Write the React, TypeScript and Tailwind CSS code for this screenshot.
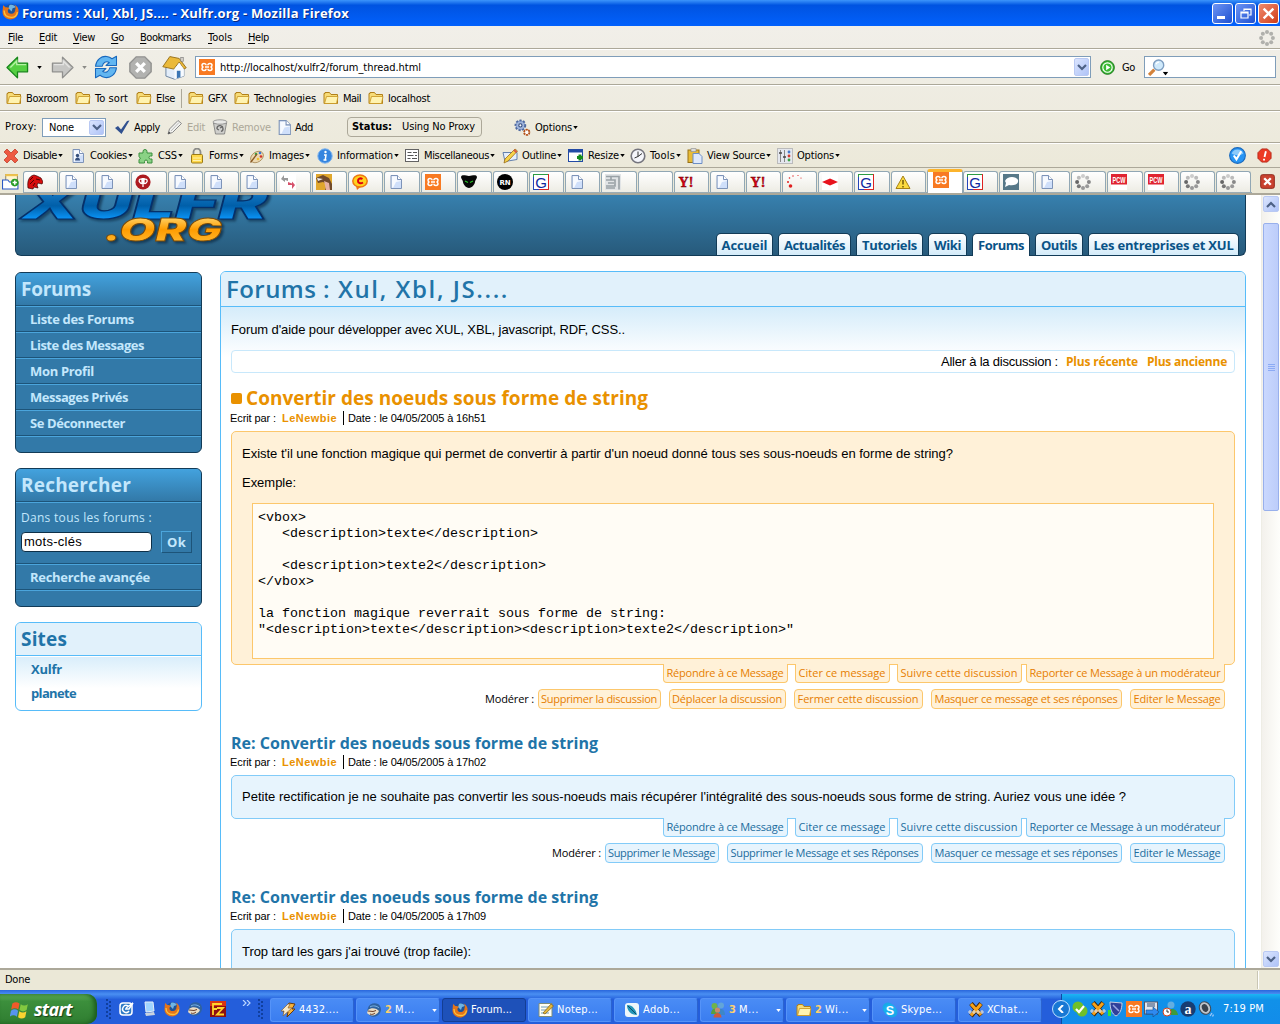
import { useLayoutEffect, useRef, useState, type ReactNode } from "react";

/* Text run set to a given width by spreading its letters. */
function Fit({ w, children, className = "" }: { w: number; children: ReactNode; className?: string }) {
  const ref = useRef<HTMLSpanElement>(null);
  const [gap, setGap] = useState<number | null>(null);
  useLayoutEffect(() => {
    const el = ref.current;
    if (!el || gap !== null) return;
    setGap((w - el.getBoundingClientRect().width) / (el.textContent || " ").length);
  }, [gap, w]);
  return (
    <span ref={ref} className={"inline-block shrink-0 whitespace-pre " + className} style={gap === null ? undefined : { letterSpacing: gap }}>
      {children}
    </span>
  );
}

const page = (
  <g>
    <path d="M3 1.500h6.500l4 4v9H3z" fill="#dfe9fb" stroke="#7d93b8" />
    <path d="M4 2.500h5v4h4v7H4z" fill="#f7faff" />
    <path d="M8 8l5-1v7H5z" fill="#cfdffa" />
    <path d="M9.500 1.500v4h4" fill="#fff" stroke="#7d93b8" />
  </g>
);
const throbber = (on: boolean) => (
  <g>
    {[0, 1, 2, 3, 4, 5, 6, 7].map((i) => {
      const a = (i * Math.PI) / 4;
      const c = on ? ["#888", "#999", "#999", "#777", "#666", "#bbb", "#ccc", "#bbb"][i] : "#b0b0ac";
      return <circle key={i} cx={8 + 5.9 * Math.cos(a)} cy={8 + 5.9 * Math.sin(a)} r="2" fill={c} />;
    })}
  </g>
);
const xul = (
  <g>
    <rect width="16" height="16" fill="#f87a22" />
    <path d="M7.200 6.300C7 3.800 3 4 3 6.200 3 7.200 3.800 8 4.600 8 3.800 8 3 8.800 3 9.800 3 12 7 12.200 7.200 9.700M8.800 6.300C9 3.800 13 4 13 6.200 13 7.200 12.200 8 11.400 8 12.200 8 13 8.800 13 9.800 13 12 9 12.200 8.800 9.700M6 8h4" fill="none" stroke="#fff" strokeWidth="1.500" />
  </g>
);
const firefox = (
  <g>
    <circle cx="8.500" cy="7.500" r="6.300" fill="#1f5396" />
    <path d="M7 2c2-1 5 0 6 2l-3 1-1 3-3-3z" fill="#6fb4e4" />
    <path d="M1 2c1 .5 1.500 1 2 2 1.500 0 3 0 4 1L5.500 6.500c-.5 3 2 4 4 3.500s3-2 3-4c1-2 0-3-1-4.500 3 1.500 4.500 4 4 7-.5 4-3.500 7-7.500 7S.5 12.500.5 8.500C.5 6 1 4 1 2z" fill="#e5741a" />
    <path d="M2 7c0 5 3.500 6.500 7 6.500 3 0 5-2 5.500-5" fill="none" stroke="#fbc23c" strokeWidth="1.300" />
  </g>
);
const bird = (
  <g>
    <path d="M2 6C3 2 8 0 12 2c3 2 4 6 2 9-2 4-8 5-11 2C1 11 1 8 2 6z" fill="#2f62a0" />
    <path d="M2 8c3-3 9-2 11 1-2 5-9 6-12 2z" fill="#eadcc4" />
    <path d="M2 9l5 .5 3-1M4 12c2 1 4 0 5-1" stroke="#6b3e28" fill="none" /><path d="M4 5c3-2 7-1 9 1" stroke="#7cb6ea" fill="none" />
  </g>
);
const folder = (
  <g>
    <path d="M1 3.500h1v-1h4.500l1.500 2h6.500v9H1z" fill="#f7dc78" stroke="#b1801a" />
    <path d="M3.500 6.500h11.500l-1.500 7H1.500z" fill="#fff3b0" stroke="#c6931f" strokeWidth=".8" />
  </g>
);
const arrowBig = (c1: string, c2: string) => (
  <path d="M.7 8L8 .8v4.200h7v6H8v4.200z" fill={c1} stroke={c2} strokeWidth=".9" strokeLinejoin="round" />
);

const icons: Record<string, ReactNode> = {
  page, xul, firefox, bird, folder,
  empty: null,
  load: throbber(true), idle: throbber(false),
  back: <g>{arrowBig("#55cf42", "#17851b")}<path d="M3 8l4.500-4.500V6H14" fill="none" stroke="#b5f2a4" /></g>,
  fwd: <g transform="matrix(-1 0 0 1 16 0)">{arrowBig("#c6c6c4", "#90908e")}<path d="M3 8l4.500-4.500V6H14" fill="none" stroke="#e4e4e2" /></g>,
  reload: (
    <g stroke="#1868bd" strokeWidth=".7" fill="#62b6f1" strokeLinejoin="round">
      <path d="M1 7.500C1.500 3 5 .5 8.500 1c1.500.2 2.500.7 3.500 1.500L15 .8V7H8l2.200-2C8 3.800 6 5 5.500 7.500z" />
      <path d="M15 8.500c-.5 4.500-4 7-7.500 6.500-1.500-.2-2.500-.7-3.500-1.500L1 15.200V9h7l-2.200 2c2.200 1.200 4.200 0 4.700-2.500z" />
    </g>
  ),
  stop: <g><path d="M5 .6h6L15.400 5v6L11 15.400H5L.6 11V5z" fill="#b2b2b0" stroke="#939391" /><path d="M5 5l6 6M11 5l-6 6" stroke="#fff" strokeWidth="2.300" /></g>,
  home: (
    <g>
      <path d="M2.500 8v5.500L8 15.500l6-2V7l-3-4z" fill="#e3edf9" stroke="#68809e" strokeWidth=".6" />
      <path d="M.5 7.500L5 1l6 1.200 4.500 6-1.500.8-3-4.500L7.500 9z" fill="#eab93a" stroke="#96701b" strokeWidth=".6" />
      <path d="M8 9l3-4 3 4v4.500l-6 2z" fill="#f8fbff" /><rect x="12" y="1.500" width="1.600" height="2.500" fill="#d8d4cc" stroke="#777" strokeWidth=".4" /><path d="M9.500 14.800V10h2.300v4.200z" fill="#3b76b5" />
    </g>
  ),
  go: <g><circle cx="8" cy="8" r="7.300" fill="#3abb33" stroke="#167016" /><circle cx="8" cy="8" r="5" fill="none" stroke="#fff" strokeWidth="1.200" /><path d="M6.500 5l4.500 3-4.500 3z" fill="#fff" /></g>,
  search: <g><path d="M1 15l5-5" stroke="#d4823a" strokeWidth="3" /><circle cx="10" cy="5.800" r="4.800" fill="#cfe9fb" stroke="#7d9dc0" strokeWidth="1.300" /><path d="M7.500 5a3 3 0 0 1 3-2" stroke="#fff" fill="none" strokeWidth="1.200" /></g>,
  check: <path d="M1 9l3-2 3 3.500L13 2l2.500-.5L7.500 15z" fill="#30508f" />,
  pencil: <g><path d="M1 15l1.500-5L11 1.500l3.500 3L5.500 13.500z" fill="#f1f1ee" stroke="#888" /><path d="M4 12l8-8.500" stroke="#bbb" /><path d="M1 15l1-2.500 1.500 1.500z" fill="#444" /></g>,
  trash: <g><path d="M1.500 4L3.500 15h9l2-11z" fill="#cfcfcc" stroke="#777" strokeWidth=".8" /><ellipse cx="8" cy="3" rx="7" ry="2.200" fill="#e8e8e6" stroke="#888" strokeWidth=".8" /><path d="M5 10a3 3 0 1 1 4 2.500M5 10l2 1M11 7.500L8 9" stroke="#666" fill="none" strokeWidth="1.300" /></g>,
  gears: <g><circle cx="6" cy="6" r="4.500" fill="#87a0cf" stroke="#506aa0" strokeWidth="2" strokeDasharray="2 1.300" /><circle cx="6" cy="6" r="3.600" fill="#9fb4dc" /><circle cx="6" cy="6" r="1.500" fill="#fff" stroke="#344b7c" /><circle cx="12" cy="12.500" r="2.500" fill="#fff" stroke="#b4531c" strokeWidth="1.700" strokeDasharray="2 .6" /></g>,
  cross: <path d="M1 4l3-3 4 4 4-4 3 3-4 4 4 4-3 3-4-4-4 4-3-3 4-4z" fill="#ee5a42" stroke="#bb3320" strokeWidth=".7" />,
  cookie: <g>{page}<circle cx="7.500" cy="7.500" r="1.700" fill="#354f7c" /><path d="M5 12.500c0-4 5-4 5 0z" fill="#354f7c" /></g>,
  puzzle: <path d="M1 5h4V3.500a2 2 0 0 1 4 0V5h5v3h-1.500a1.500 1.500 0 0 0 0 3H14v4H9.500v-1.500a1.500 1.500 0 0 0-3 0V15H1v-3.500l1.500-1-1.500-2z" fill="#8ad285" stroke="#3b8f3e" />,
  lock: <g><path d="M4.500 7V4a3.500 3.500 0 0 1 7 0v3" fill="none" stroke="#8c8c88" strokeWidth="1.800" /><rect x="2.500" y="6.500" width="11" height="8.500" rx="1" fill="#ffd84a" stroke="#9c7b16" /><path d="M4 10h8M4 12.500h8" stroke="#fff2ac" /></g>,
  palette: <g><ellipse cx="8" cy="9" rx="7" ry="5" fill="#ecd9b2" stroke="#a98a56" strokeWidth=".8" transform="rotate(-35 8 9)" /><circle cx="7" cy="6" r="1.300" fill="#3aa84a" /><circle cx="11" cy="5" r="1.300" fill="#3a75d8" /><circle cx="12" cy="8.500" r="1.300" fill="#d4322a" /><circle cx="9" cy="11" r="1.300" fill="#f0c030" /><path d="M1.500 14.500L8 6" stroke="#8c5a22" strokeWidth="1.300" /></g>,
  info: <g><circle cx="8" cy="8" r="7.200" fill="#3585df" stroke="#7fb4ee" /><path d="M7 7h2l-.8 5M6.500 12h3" stroke="#fff" strokeWidth="1.500" fill="none" /><circle cx="8.500" cy="4" r="1.200" fill="#fff" /></g>,
  list: <g><rect x="1.500" y="1.500" width="13" height="12" fill="#fff" stroke="#636363" /><path d="M3.500 4.500h4M9 4.500h4M3.500 7.500h6M11 7.500h2M3.500 10.500h3M8 10.500h5" stroke="#555" /></g>,
  outline: <g><path d="M1 4.500h14v7l-12 2z" fill="#e5eefb" stroke="#6381ad" /><path d="M2 15l1-4L13 1l2.500 2L6 13z" fill="#f7d44b" stroke="#9a6c16" strokeWidth=".8" /><path d="M12 2l2.500 2.200" stroke="#d95a45" strokeWidth="2" /></g>,
  resize: <g><rect x=".5" y="1.500" width="14" height="12" fill="#fff" stroke="#224ba5" /><path d="M0 3h15" stroke="#224ba5" strokeWidth="3" /><path d="M9 9.500h6M12 6.500v6" stroke="#168b1d" strokeWidth="3" /></g>,
  clock: <g><circle cx="8" cy="8" r="6.800" fill="#f5f6fb" stroke="#76767e" strokeWidth="1.600" /><path d="M8 3.500V8.500L4.500 10M8 8.500l4-3" stroke="#333" fill="none" /></g>,
  paste: <g><rect x="1" y="2" width="11" height="12.500" fill="#e8bc38" stroke="#977117" /><rect x="4" y=".7" width="5" height="3" fill="#ddd" stroke="#888" strokeWidth=".6" /><path d="M6 5.500h6l3 3v7H6z" fill="#dfe9fb" stroke="#6c8ec5" /></g>,
  sliders: <g><rect x=".5" y=".5" width="15" height="15" fill="#e4e7ee" stroke="#bbb" /><path d="M3.500 2v12M7.500 2v12" stroke="#888" /><path d="M2 5h3M6 9h3" stroke="#444" strokeWidth="1.600" /><circle cx="12" cy="4" r="1.400" fill="#4678ca" /><circle cx="12" cy="8" r="1.400" fill="#d2392d" /><circle cx="12" cy="12" r="1.400" fill="#3ba443" /></g>,
  valid: <g><circle cx="8" cy="8" r="7.400" fill="#2795f4" stroke="#1868bd" /><path d="M2.500 6a6 6 0 0 1 11 0c-3 2-8 2-11 0z" fill="#8bcafb" /><path d="M4.500 8l2.500 3.500L11.500 4" stroke="#fff" strokeWidth="2" fill="none" /></g>,
  alert: <g><path d="M5 1h6l4 4v6l-4 4H5l-4-4V5z" fill="#ec3a25" stroke="#b52a1a" strokeWidth="1" /><path d="M9.500 3.500L8 9.500M7.500 11.500v1.800" stroke="#fff" strokeWidth="2" /></g>,
  newtab: <g><path d="M3.500 8V1.500h11V9" fill="#fff5cf" stroke="#908a72" /><path d="M3 2h12" stroke="#eec24c" strokeWidth="2" /><path d="M.5 15V6.500h5l1.500 2h8V15z" fill="#fff" stroke="#2a59c5" /><circle cx="12" cy="9" r="3.600" fill="#289b25" /><path d="M10 9h4M12 7v4" stroke="#fff" strokeWidth="1.400" /></g>,
  dino: <g><path d="M1 14c-1-7 1-12 6-13l3 1 4 2 2 4-1 2-4-1-1 2 1 3-4-1-1 2z" fill="#d80d0d" stroke="#3a0000" strokeWidth=".7" /><path d="M3 6l3-3M3 10l4-4M6 12l2-3M9 5l4 1" stroke="#400" strokeWidth=".9" /></g>,
  moz: <g><circle cx="8" cy="8" r="7.600" fill="#ad1a1f" /><path d="M7 5.500C4 4 3.500 7 5 8.500S7 10 7 8V4M9 5.500c3-1.500 4 1.500 2.500 3S9 10 9 8V4M8 4v9" stroke="#fff" strokeWidth="1.300" fill="none" /></g>,
  swap: <g><rect width="16" height="16" fill="#fff" /><path d="M4 1L1 5l4 3V6l3 1V4L4 4z" fill="#999" /><path d="M12 15l3-4-3-3.500v2L8 8v3h4z" fill="#d6506a" /></g>,
  gnu: <g><rect width="16" height="16" fill="#e0a72c" /><path d="M0 4l7-3 6 3 3 6v6H9l2-6-4-2-5 1z" fill="#704a2a" /><path d="M8 7l5 2 1 7h-4z" fill="#e6b3a4" /><path d="M1 4l6 1-5 2z" fill="#eee" /></g>,
  bubble: <g><ellipse cx="8" cy="7" rx="7.200" ry="6" fill="#ffd21c" stroke="#ee7612" strokeWidth="1.500" /><path d="M4 12l1 4 4-3.500" fill="#ee7612" /><path d="M10.500 5C8 3.500 6 5 6 7s2.500 3 5 1.500" stroke="#d01" strokeWidth="2" fill="none" /></g>,
  panther: <g><path d="M0 3C1 0 5 2 8 2s7-2 8 1c0 2-2 3-2 5s-3 6-6 6-6-4-6-6-2-3-2-5z" fill="#080808" /><path d="M4 7l3 1.500M12 7L9 8.500" stroke="#28c328" strokeWidth="1.200" /></g>,
  rn: <g><circle cx="8" cy="8" r="8" fill="#000" /><text x="8" y="10.500" fontSize="7" textAnchor="middle" fill="#fff" fontWeight="700" fontFamily="DejaVu Sans">RN</text></g>,
  g: <g><rect x=".5" y=".5" width="15" height="15" fill="#fff" stroke="#2c9b42" /><path d="M15.500 0v15.500H5" fill="none" stroke="#d22" /><path d="M.5 3v12.500H6" fill="none" stroke="#2344bb" /><text x="8" y="13.500" fontSize="15" textAnchor="middle" fill="#10289e" fontFamily="Liberation Sans">G</text></g>,
  grey: <g><rect width="16" height="16" fill="#e1e4e6" /><path d="M1 2.500h13v13M1 6h9v6H1M6 2v4M3 9h6M1 14h9" stroke="#99a1a6" strokeWidth="1.600" fill="none" /></g>,
  y: <text x="8" y="13" fontSize="14" textAnchor="middle" fill="#e00010" stroke="#5c0008" strokeWidth=".4" fontWeight="700" fontFamily="Liberation Serif">Y!</text>,
  dots: <g fill="#e02020"><circle cx="4.500" cy="12" r="1.800" /><circle cx="2" cy="8" r="1" /><circle cx="3.500" cy="4" r=".8" /><circle cx="7" cy="2" r=".7" /><circle cx="12" cy="1.500" r=".6" /><circle cx="15" cy="4" r=".6" /></g>,
  diamond: <g><rect width="16" height="16" fill="#fff" /><path d="M0 8l8-3.500L16 8l-8 3.500z" fill="#e8131d" /></g>,
  warn: <g><path d="M8 2l7 12.500H1z" fill="#fbda3f" stroke="#a68114" strokeLinejoin="round" /><path d="M8 6v4.500M8 12v1.500" stroke="#5b4500" strokeWidth="1.300" /></g>,
  fish: <g><rect width="16" height="16" fill="#577888" /><path d="M2 7c2-5 11-5 13-1 1 4-4 6-9 5l-4 2 1-4z" fill="#fff" /></g>,
  pcw: <g><rect width="16" height="16" fill="#fff" /><rect width="16" height="10.500" fill="#e02431" /><text x="1.500" y="8.800" fontSize="8.500" textLength="13" lengthAdjust="spacingAndGlyphs" fill="#fff" fontWeight="700" fontFamily="Liberation Sans">PCW</text></g>,
  closetab: <g><rect x=".7" y=".7" width="14.600" height="14.600" rx="2" fill="#c9422f" stroke="#8c2517" /><path d="M4.500 4.500l7 7M11.500 4.500l-7 7" stroke="#fff" strokeWidth="2.500" /></g>,
  desk: <g><rect x="2" y="2" width="12" height="12" rx="3" fill="#2d7ac5" stroke="#fff" strokeWidth="1.500" /><path d="M10 5a3.500 3.500 0 1 0 1 5M7 8h4l4-6-7 5" stroke="#fff" fill="none" strokeWidth="1.500" /></g>,
  pc: <g><path d="M4 1h8l1 9-8 1z" fill="#9fd4ff" stroke="#e4eef8" /><path d="M4 12l9-1 1 3-9 1z" fill="#cad4de" /></g>,
  fz: <g><rect width="16" height="16" fill="#8d1010" /><path d="M0 0h16v5H0z" fill="#d93613" /><path d="M3 14V3h9M3 8h4M7 7h6l-6 6.500h7" stroke="#ffd52b" strokeWidth="1.800" fill="none" /></g>,
  winamp: <g><path d="M9 1l6 1-3 5h3l-8 8 1-5H3z" fill="#f6b33b" stroke="#67390c" /><path d="M8 2L1 9h3l-1 5 9-8H8l2-4z" fill="#f7e9c9" stroke="#846038" strokeWidth=".7" /></g>,
  note: <g><path d="M1 1.500h13v13H1z" fill="#fffff4" stroke="#7c8c7c" /><path d="M3 5h8M3 8h8M3 11h8" stroke="#6c9cbd" /><path d="M5 11l8-9 2.500 2L7 12z" fill="#e4b83a" stroke="#7d5a16" strokeWidth=".7" /></g>,
  adobe: <g><rect x="1" y="1" width="14" height="14" rx="3" fill="#eef6fa" /><path d="M3 3c6 0 9 5 10 10C7 13 3 9 3 3z" fill="#2496b8" /><path d="M4 4l8 8" stroke="#0d4c66" /></g>,
  people: <g><circle cx="4.500" cy="4" r="3" fill="#70b34b" /><circle cx="11" cy="3.500" r="3" fill="#63a5d8" /><path d="M7 13c0-8 8-8 8 0z" fill="#3d87c8" /><path d="M1 12c0-7 7-7 7 0z" fill="#58a040" /><circle cx="7.500" cy="8" r="2.600" fill="#cb8a6a" /><path d="M3.500 15.500c0-6 8-6 8 0z" fill="#cd5b3e" /></g>,
  skype: <g><circle cx="6" cy="6" r="5.500" fill="#19a9e8" /><circle cx="10" cy="10" r="5.500" fill="#19a9e8" /><circle cx="8" cy="8" r="6" fill="#1ab0ef" /><text x="8" y="12.500" fontSize="12.500" textAnchor="middle" fill="#fff" fontWeight="700" fontFamily="Liberation Sans">S</text></g>,
  xchat: <g><path d="M3 1.500l10 12M13 1.500L3 14" stroke="#3c220a" strokeWidth="4.500" /><path d="M3 2l10 11M13 2L3 13.500" stroke="#f7a21a" strokeWidth="3" /><path d="M0 10h16M2 8v4M6 8v4M10 8v4M14 8v4" stroke="#d9d9d9" strokeWidth="1.200" /></g>,
  skok: <g><circle cx="6" cy="6" r="5.500" fill="#6fc02a" /><circle cx="10" cy="10" r="5.500" fill="#6fc02a" /><path d="M4 8l3 3 5-6" stroke="#fff" strokeWidth="2.200" fill="none" /></g>,
  shield: <g><path d="M2 1l12 1c0 6-2 11-6 13-4-2-6-7-6-14z" fill="#30409a" stroke="#c9cde0" /><path d="M5 4l6 6" stroke="#9aa6e4" strokeWidth="1.500" /><rect x="0" y="9" width="3" height="6" fill="#35e23a" /></g>,
  net: <g><rect x=".5" y="1" width="13" height="12" fill="#dfe5ef" stroke="#556" /><path d="M3 2v4h8V2" fill="#8797b0" /><path d="M2 9h7V6l6 5-6 5v-3H2z" fill="#2f8af0" stroke="#12498c" strokeWidth=".6" /></g>,
  msn: <g><circle cx="9" cy="4" r="3.500" fill="#64aee0" /><path d="M5 14c0-8 10-8 11 0z" fill="#3e9b3b" /><circle cx="5" cy="11" r="4" fill="#fff" stroke="#d34420" /><path d="M5 8.500V11h2" stroke="#333" fill="none" /></g>,
  a: <g><circle cx="8" cy="8" r="7.700" fill="#183d72" /><text x="8" y="12.500" fontSize="14" textAnchor="middle" fill="#fff" fontWeight="700" fontFamily="Liberation Serif">a</text></g>,
  vol: <g><ellipse cx="7" cy="7" rx="5.500" ry="6.500" fill="#bfc4ca" stroke="#3d4752" transform="rotate(-25 7 7)" /><ellipse cx="7" cy="7" rx="3" ry="4" fill="#39424d" transform="rotate(-25 7 7)" /><path d="M12 15l2-3M14.500 15.500l1-2" stroke="#9dc8f8" strokeWidth="1.300" /></g>,
  win: <g><path d="M2 3c2-1.500 4-1.500 6 0L7 8C5 6.500 3 6.500 1 8z" fill="#ef5a2a" /><path d="M9 3.500c2 1.500 4 1.500 6 0l-1 5c-2 1.500-4 1.500-6 0z" fill="#83c940" /><path d="M.8 9c2-1.500 4-1.500 6 0l-1 5c-2-1.500-4-1.500-6 0z" fill="#5794ee" /><path d="M7.800 9.500c2 1.500 4 1.500 6 0l-1 5c-2 1.500-4 1.500-6 0z" fill="#fad331" /></g>,
};

function Icon({ n, className = "size-4" }: { n: string; className?: string }) {
  return <svg viewBox="0 0 16 16" className={"block shrink-0 " + className}>{icons[n]}</svg>;
}
function Caret({ className = "text-black" }: { className?: string }) {
  return <svg viewBox="0 0 6 4" className={"block h-[3px] w-[5px] shrink-0 " + className}><path d="M0 0h6L3 4z" fill="currentColor" /></svg>;
}
function Chevron({ up = false }: { up?: boolean }) {
  return (
    <span className="flex h-full w-full items-center justify-center rounded-[2px] border border-[#b9c9f3] bg-gradient-to-br from-[#dbe5fe] to-[#afc3f7]">
      <svg viewBox="0 0 10 7" className="block h-[7px] w-[10px]"><path d={up ? "M1 6l4-4 4 4" : "M1 1l4 4 4-4"} fill="none" stroke="#4d6185" strokeWidth="2.200" /></svg>
    </span>
  );
}

const menus: [string, number, number][] = [["File", 31, 15], ["Edit", 34, 18], ["View", 38, 22], ["Go", 29, 13], ["Bookmarks", 68, 51], ["Tools", 40, 24], ["Help", 40, 21]];
const marks: [string, string, number][] = [["Boxroom", "w-[69px]", 42], ["To sort", "w-[61px]", 33], ["Else", "w-[45px]", 19], ["|", "", 0], ["GFX", "w-[46px]", 19], ["Technologies", "w-[89px]", 62], ["Mail", "w-[45px]", 18], ["localhost", "w-[70px]", 42]];
const tools: [string, string, string, number][] = [
  ["cross", "Disable", "w-[67px]", 34], ["cookie", "Cookies", "w-[68px]", 37], ["puzzle", "CSS", "w-[51px]", 19], ["lock", "Forms", "w-[60px]", 29],
  ["palette", "Images", "w-[68px]", 35], ["info", "Information", "w-[87px]", 56], ["list", "Miscellaneous", "w-[98px]", 65], ["outline", "Outline", "w-[66px]", 34],
  ["resize", "Resize", "w-[62px]", 31], ["clock", "Tools", "w-[57px]", 25], ["paste", "View Source", "w-[90px]", 58], ["sliders", "Options", "w-[70px]", 37],
];
const tabs = "dino page page moz page page page swap gnu bubble page xul panther rn g page grey empty y page y dots diamond g warn xul g fish page load pcw pcw load load".split(" ");

function Chrome() {
  const bar = "flex shrink-0 items-center border-t border-t-white border-b border-b-[#aca899]";
  return (
    <>
      <header className="flex h-[26px] shrink-0 items-center bg-gradient-to-b from-[#3c94fb] via-[#0053e1] via-20% to-[#0261fc] pl-[2px] pr-[1px]">
        <Icon n="firefox" className="mb-1 h-[17px] w-[17px]" />
        <Fit w={327} className="ml-[3px] font-['Open_Sans',sans-serif] text-[13px] font-bold text-white [text-shadow:1px_1px_0_#0a2a80]">Forums : Xul, Xbl, JS.... - Xulfr.org - Mozilla Firefox</Fit>
        <div className="ml-auto flex gap-[2px] *:flex *:size-[21px] *:items-center *:justify-center *:rounded-[3px] *:border *:border-white">
          <span className="bg-gradient-to-br from-[#6d94f4] to-[#1d4fd0]"><i className="mr-1 mt-2 h-[3px] w-[8px] bg-white" /></span>
          <span className="bg-gradient-to-br from-[#6d94f4] to-[#1d4fd0]"><svg viewBox="0 0 12 12" className="size-3"><path d="M4 4V2h7v6H9M1 5h7v6H1zM1 6h7M4 2.500h7" fill="none" stroke="#fff" strokeWidth="1.200" /></svg></span>
          <span className="bg-gradient-to-br from-[#f08a6c] to-[#cf3a12]"><svg viewBox="0 0 12 12" className="size-[13px]"><path d="M1.500 1.500l9 9M10.500 1.500l-9 9" stroke="#fff" strokeWidth="2.200" /></svg></span>
        </div>
      </header>
      <nav className="flex h-[23px] shrink-0 items-center border-b border-[#aca899] pt-px pl-2 pr-[5px]">
        {menus.map(([t, step, w]) => (
          <span key={t} style={{ width: step }}><Fit w={w}><u className="underline-offset-2">{t[0]}</u>{t.slice(1)}</Fit></span>
        ))}
        <Icon n="idle" className="ml-auto size-4" />
      </nav>
      <div className={bar + " h-9 pl-[6px]"}>
        <Icon n="back" className="size-[23px]" /><span className="ml-[8px]"><Caret /></span>
        <Icon n="fwd" className="ml-[9px] size-[23px]" /><span className="ml-[8px]"><Caret className="text-[#8a8a86]" /></span>
        <Icon n="reload" className="ml-[7px] size-6" /><Icon n="stop" className="ml-[11px] size-[23px]" /><Icon n="home" className="ml-[10px] size-[25px]" />
        <div className="ml-[8px] flex h-[22px] w-[896px] items-center border border-[#7f9db9] bg-white pl-[3px] pr-[1px]">
          <Icon n="xul" /><Fit w={201} className="mt-[2px] ml-[5px]">http://localhost/xulfr2/forum_thread.html</Fit>
          <span className="ml-auto h-[18px] w-[15px]"><Chevron /></span>
        </div>
        <Icon n="go" className="ml-[9px] size-[15px]" /><Fit w={13} className="mt-[2px] ml-[7px]">Go</Fit>
        <div className="ml-[9px] flex h-[22px] w-[132px] items-center border border-[#7f9db9] bg-white pl-[3px]"><Icon n="search" className="size-[17px]" /><span className="mt-3 -ml-[2px]"><Caret className="scale-125 text-black" /></span></div>
      </div>
      <div className={bar + " h-[26px] pl-[6px]"}>
        {marks.map(([t, c, w]) => t === "|" ? <i key={t} className="mr-[6px] h-[19px] w-px bg-[#aca899]" /> : (
          <span key={t} className={"flex shrink-0 items-center gap-[4px] " + c}><Icon n="folder" /><Fit w={w} className="mt-[2px]">{t}</Fit></span>
        ))}
      </div>
      <div className={bar + " h-8 pl-[5px]"}>
        <Fit w={32}>Proxy:</Fit>
        <span className="ml-[5px] flex h-[19px] w-[64px] items-center border border-[#7f9db9] bg-white pl-[6px] pr-px"><Fit w={25} className="mt-px">None</Fit><span className="ml-auto h-[15px] w-[15px]"><Chevron /></span></span>
        <Icon n="check" className="ml-[8px] size-4" /><Fit w={26} className="mt-[2px] ml-[4px]">Apply</Fit>
        <Icon n="pencil" className="ml-[7px] size-4" /><Fit w={18} className="mt-[2px] ml-[4px] text-[#aca899]">Edit</Fit>
        <Icon n="trash" className="ml-[7px] size-4" /><Fit w={39} className="mt-[2px] ml-[4px] text-[#aca899]">Remove</Fit>
        <Icon n="page" className="ml-[5px] size-[17px]" /><Fit w={18} className="mt-[2px] ml-[2px]">Add</Fit>
        <span className="ml-[34px] flex h-[20px] w-[135px] items-center rounded-[4px] border border-[#aca899] pl-[4px]"><Fit w={40} className="font-bold">Status:</Fit><Fit w={73} className="ml-[10px]">Using No Proxy</Fit></span>
        <Icon n="gears" className="ml-[32px] size-[17px]" /><Fit w={37} className="mt-[2px] ml-[4px] mr-px">Options</Fit><Caret />
      </div>
      <div className={bar + " h-[25px] pl-[3px] pr-[8px]"}>
        {tools.map(([i, t, c, w]) => (
          <span key={t + i} className={"flex shrink-0 items-center " + c}><Icon n={i} /><Fit w={w} className="mt-px ml-[4px] mr-px">{t}</Fit><Caret /></span>
        ))}
        <Icon n="valid" className="ml-auto size-[17px]" /><Icon n="alert" className="ml-[11px] size-[15px]" />
      </div>
      <div className="flex h-[27px] shrink-0 items-end border-b-2 border-[#aca899] pl-[2px]">
        <Icon n="newtab" className="mb-[3px] size-[17px]" />
        <div className="ml-1 grid h-[25px] w-[1229px] grid-cols-[repeat(34,minmax(0,1fr))] items-end border-b border-[#9bacb5]">
          {tabs.map((t, i) => i === 25 ? (
            <span key={i} className="-mb-px flex h-6 rounded-t-[3px] border-x border-t-[3px] border-x-[#91a7b4] border-t-[#fcb42c] bg-white pl-[5px]"><Icon n={t} /></span>
          ) : (
            <span key={i} className="mr-px flex h-[21px] items-center rounded-t-[3px] border border-b-0 border-[#91a7b4] bg-gradient-to-b from-white to-[#edece4] pl-[3px]"><Icon n={t} /></span>
          ))}
        </div>
        <Icon n="closetab" className="mb-[4px] ml-[8px] size-[15px]" />
      </div>
    </>
  );
}

const siteTabs: [string, string, number][] = [["Accueil", "w-[57px]", 46], ["Actualités", "w-[73px]", 61], ["Tutoriels", "w-[67px]", 55], ["Wiki", "w-[39px]", 27], ["Forums", "w-[58px]", 46], ["Outils", "w-[48px]", 36], ["Les entreprises et XUL", "w-[151px]", 140]];

function SiteHeader() {
  return (
    <div className="ml-[15px] flex h-[61px] w-[1231px] items-end justify-between rounded-b-[6px] border border-t-0 border-[#123b57] bg-gradient-to-b from-[#3780ae] to-[#275a7b]">
      <svg viewBox="0 0 270 60" className="block h-[60px] w-[270px]" fontFamily="Inter, sans-serif" fontWeight="900" fontStyle="italic">
        <defs>
          <linearGradient id="blue" gradientUnits="userSpaceOnUse" x1="0" y1="0" x2="0" y2="24"><stop offset="0" stopColor="#1272bd" /><stop offset=".45" stopColor="#005fa9" /><stop offset="1" stopColor="#0a94f7" /></linearGradient>
          <linearGradient id="gold" gradientUnits="userSpaceOnUse" x1="0" y1="23" x2="0" y2="46"><stop offset="0" stopColor="#ffcf60" /><stop offset=".5" stopColor="#ff9c00" /><stop offset="1" stopColor="#ffb428" /></linearGradient>
        </defs>
        <text x="5" y="24" fontSize="47" textLength="247" lengthAdjust="spacingAndGlyphs" fill="url(#blue)" stroke="#05306a" strokeWidth="1.200" className="[filter:drop-shadow(2px_2px_1px_#1b4767)]">XULFR</text>
        <text x="88" y="46" fontSize="32" textLength="118" lengthAdjust="spacingAndGlyphs" fill="url(#gold)" stroke="#7b4a08" strokeWidth=".8" className="[filter:drop-shadow(2px_2px_1px_#163c58)]">.ORG</text>
      </svg>
      <div className="mr-[6px] flex gap-[5px] font-['Open_Sans',sans-serif] text-[13px] font-bold text-[#0a5387]">
        {siteTabs.map(([t, c, w]) => (
          <span key={t} className={"flex h-[22px] items-center justify-center rounded-t-[5px] border border-b-0 border-[#123b57] " + (t === "Forums" ? "-mb-px h-[23px] bg-white " : "bg-gradient-to-b from-white to-[#d3ebf9] ") + c}><Fit w={w}>{t}</Fit></span>
        ))}
      </div>
    </div>
  );
}

function SideHead({ w, children, light = false }: { w: number; children: string; light?: boolean }) {
  return <h2 className={"flex h-[33px] items-center pl-[5px] text-[19px] font-bold " + (light ? "border-b border-[#57bcf9] bg-[#e1f1fb] text-[#2174a8]" : "border-b border-[#1d5479] bg-gradient-to-b from-[#43a2de] to-[#3279a8] text-[#c3e7fc]")}><Fit w={w}>{children}</Fit></h2>;
}
function SideRow({ w, children }: { w: number; children: string }) {
  return <div className="flex h-[26px] items-center border-t border-b border-t-[#4ba5dc] border-b-[#1d5479] pl-[14px] font-bold"><Fit w={w}>{children}</Fit></div>;
}
function Sidebar() {
  const box = "overflow-hidden rounded-[6px] border border-[#123b57] bg-[#3279a8] text-[13px] text-[#c3e7fc]";
  return (
    <aside className="flex w-[187px] shrink-0 flex-col gap-[15px] pt-px font-['Open_Sans',sans-serif]">
      <div className={box + " h-[181px]"}>
        <SideHead w={70}>Forums</SideHead>
        <SideRow w={104}>Liste des Forums</SideRow><SideRow w={114}>Liste des Messages</SideRow><SideRow w={64}>Mon Profil</SideRow><SideRow w={98}>Messages Privés</SideRow><SideRow w={95}>Se Déconnecter</SideRow>
        <div className="border-t border-[#4ba5dc]" />
      </div>
      <div className={box + " h-[139px]"}>
        <SideHead w={110}>Rechercher</SideHead>
        <div className="h-[62px] border-t border-b border-t-[#4ba5dc] border-b-[#1d5479] pl-[5px]">
          <div className="mt-[5px] h-[23px] text-[12px] leading-[20px]"><Fit w={131}>Dans tous les forums :</Fit></div>
          <div className="flex items-center">
            <span className="flex h-[20px] w-[131px] items-center rounded-[4px] border border-[#0d3048] bg-white pl-[2px] font-['Liberation_Sans',sans-serif] text-black"><Fit w={58}>mots-clés</Fit></span>
            <span className="ml-[9px] flex h-[22px] w-[31px] items-center justify-center border border-[#4ba5dc] border-r-[#1d5479] border-b-[#1d5479] font-bold"><Fit w={19}>Ok</Fit></span>
          </div>
        </div>
        <SideRow w={120}>Recherche avançée</SideRow>
        <div className="border-t border-[#4ba5dc]" />
      </div>
      <div className="h-[89px] overflow-hidden rounded-[6px] border border-[#57bcf9] bg-gradient-to-b from-[#d5ecfa] from-35% to-white to-75% text-[13px] font-bold text-[#2174a8]">
        <SideHead w={46} light>Sites</SideHead>
        <div className="flex h-6 items-center border-t border-white pl-[15px]"><Fit w={31}>Xulfr</Fit></div>
        <div className="flex h-6 items-center pt-[2px] pl-[15px]"><Fit w={45}>planete</Fit></div>
      </div>
    </aside>
  );
}

type Chip = [string, string, number];
const replyChips: Chip[] = [["Répondre à ce Message", "w-[125px] mr-[7px]", 117], ["Citer ce message", "w-[95px] mr-[7px]", 87], ["Suivre cette discussion", "w-[125px] mr-[4px]", 117], ["Reporter ce Message à un modérateur", "w-[199px]", 191]];
const modTopic: Chip[] = [["Supprimer la discussion", "w-[123px]", 116], ["Déplacer la discussion", "w-[117px]", 110], ["Fermer cette discussion", "w-[129px]", 121], ["Masquer ce message et ses réponses", "w-[191px]", 183], ["Editer le Message", "w-[95px]", 87]];
const modReply: Chip[] = [["Supprimer le Message", "w-[114px]", 107], ["Supprimer le Message et ses Réponses", "w-[196px]", 188], ["Masquer ce message et ses réponses", "w-[191px]", 183], ["Editer le Message", "w-[95px]", 87]];

function Meta({ time }: { time: string }) {
  return (
    <div className="-ml-px flex h-[14px] items-center text-[11px]">
      <Fit w={46}>Ecrit par :</Fit><Fit w={55} className="ml-[6px] font-bold text-[#e99100]">LeNewbie</Fit>
      <i className="ml-[6px] h-[14px] w-px bg-black" /><Fit w={138} className="ml-[4px]">{"Date : le 04/05/2005 à " + time}</Fit>
    </div>
  );
}
function Actions({ mods, warm = false }: { mods: Chip[]; warm?: boolean }) {
  const tone = warm ? "border-[#fcc76c] bg-[#fff1d8] text-[#e67e00]" : "border-[#82cbf8] bg-[#e7f4fd] text-[#216c9e]";
  return (
    <div className="pr-[10px] font-['Open_Sans',sans-serif] text-[11px]">
      <div className="relative -mt-px flex justify-end">
        {replyChips.map(([t, c, w]) => <span key={t} className={"flex h-[19px] items-center justify-center rounded-b-[4px] border border-t-0 pr-px " + tone + " " + c}><Fit w={w}>{t}</Fit></span>)}
      </div>
      <div className="mt-[6px] flex items-center justify-end gap-2">
        <Fit w={49} className="-mr-1">Modérer :</Fit>
        {mods.map(([t, c, w]) => <span key={t} className={"flex h-5 items-center justify-center rounded-[4px] border pr-px " + tone + " " + c}><Fit w={w}>{t}</Fit></span>)}
      </div>
    </div>
  );
}
const code = `<vbox>
   <description>texte</description>

   <description>texte2</description>
</vbox>

la fonction magique reverrait sous forme de string:
"<description>texte</description><description>texte2</description>"
`;

function Thread() {
  const reply = "rounded-[5px] border border-[#82cbf8] bg-[#e7f4fd] pl-[10px]";
  const heading = "mt-[24px] flex h-[22px] items-center pb-[2px] font-['Open_Sans',sans-serif] text-[16px] font-bold text-[#2174a8]";
  const jump = "font-['Open_Sans',sans-serif] text-[12px] font-bold text-[#e99100]";
  return (
    <main className="ml-[18px] h-[760px] w-[1026px] rounded-t-[6px] border border-[#57bcf9] font-['Liberation_Sans',sans-serif] text-[13px] text-black">
      <h1 className="flex h-[35px] items-center rounded-t-[5px] border-b border-[#57bcf9] bg-[#e1f1fb] pl-[5px] font-['Open_Sans',sans-serif] text-[24px] font-semibold text-[#2174a8]"><Fit w={104}>Forums :</Fit><Fit w={171} className="ml-[8px]">Xul, Xbl, JS....</Fit></h1>
      <div className="bg-gradient-to-b from-[#d5ecfa] to-white to-[50px] px-[10px]">
        <div className="flex h-[43px] items-center pt-[2px]"><Fit w={394}>Forum d'aide pour développer avec XUL, XBL, javascript, RDF, CSS..</Fit></div>
        <div className="flex h-[23px] items-center justify-end rounded-[4px] border border-[#c8e8fb] bg-white pr-[7px]">
          <Fit w={117}>Aller à la discussion :</Fit><Fit w={72} className={"ml-2 " + jump}>Plus récente</Fit><Fit w={80} className={"ml-[9px] " + jump}>Plus ancienne</Fit>
        </div>
        <h2 className="mt-[12px] flex h-[26px] items-center font-['Open_Sans',sans-serif] text-[19px] font-bold text-[#e99100]"><i className="mr-[4px] size-[11px] rounded-[2px] bg-[#e99100]" /><Fit w={402}>Convertir des noeuds sous forme de string</Fit></h2>
        <Meta time="16h51" />
        <div className="mt-[6px] h-[234px] rounded-[5px] border border-[#fcc76c] bg-[#fff1d8] px-[10px] pt-[14px]">
          <div className="h-[29px] leading-[16px]"><Fit w={711}>Existe t'il une fonction magique qui permet de convertir à partir d'un noeud donné tous ses sous-noeuds en forme de string?</Fit></div>
          <div className="h-[28px] leading-[16px]"><Fit w={54}>Exemple:</Fit></div>
          <pre className="mx-[10px] h-[156px] border border-[#fcc76c] bg-[#fffcf5] pt-[6px] pl-[5px] font-['Liberation_Mono',monospace] text-[13.33px] leading-4">{code}</pre>
        </div>
        <Actions mods={modTopic} warm />
        <h3 className={heading}><Fit w={367}>Re: Convertir des noeuds sous forme de string</Fit></h3>
        <Meta time="17h02" />
        <div className={reply + " mt-[6px] flex h-[44px] items-center"}><Fit w={884}>Petite rectification je ne souhaite pas convertir les sous-noeuds mais récupérer l'intégralité des sous-noeuds sous forme de string. Auriez vous une idée ?</Fit></div>
        <Actions mods={modReply} />
        <h3 className={heading}><Fit w={367}>Re: Convertir des noeuds sous forme de string</Fit></h3>
        <Meta time="17h09" />
        <div className={reply + " mt-[6px] h-[80px] pt-[15px]"}><Fit w={229}>Trop tard les gars j'ai trouvé (trop facile):</Fit></div>
      </div>
    </main>
  );
}

function Scrollbar() {
  return (
    <div className="flex w-[19px] flex-col items-center border-l border-[#eeede5] bg-gradient-to-r from-[#f3f1ec] to-[#fefefb] px-px">
      <span className="mt-px h-[16px] w-[16px]"><Chevron up /></span>
      <div className="mt-[11px] flex h-[288px] w-[16px] flex-col items-center justify-center gap-px rounded-[2px] border border-[#98b0ec] bg-gradient-to-r from-[#cad8fe] to-[#bccdfa]">
        {[0, 1, 2, 3].map((i) => <i key={i} className="h-px w-[7px] bg-[#8cabf5]" />)}
      </div>
      <span className="mt-auto mb-[1px] h-[16px] w-[16px]"><Chevron /></span>
    </div>
  );
}

const tasks: { i: string; t: string; w: number; n?: string; on?: boolean }[] = [
  { i: "winamp", t: "4432....", w: 40 }, { i: "bird", t: "M...", w: 20, n: "2" }, { i: "firefox", t: "Forum...", w: 41, on: true }, { i: "note", t: "Notep...", w: 41 },
  { i: "adobe", t: "Adob...", w: 37 }, { i: "people", t: "M...", w: 20, n: "3" }, { i: "folder", t: "Wi...", w: 24, n: "2" }, { i: "skype", t: "Skype...", w: 41 }, { i: "xchat", t: "XChat...", w: 41 },
];
function Grip() {
  return <svg viewBox="0 0 6 20" className="block h-5 w-[6px] shrink-0">{[0, 1, 2, 3, 4].map((i) => <g key={i}><rect x="0" y={i * 4} width="2" height="2" fill="#103f9e" /><rect x="3" y={i * 4 + 2} width="2" height="2" fill="#103f9e" /></g>)}</svg>;
}
function Taskbar() {
  return (
    <footer className="flex h-[34px] shrink-0 items-end bg-gradient-to-b from-[#2a66dc] via-[#4a8ff2] via-12% to-[#245edb] to-28% text-white">
      <div className="flex h-[30px] w-[97px] shrink-0 items-center rounded-r-[10px] bg-gradient-to-b from-[#5eac56] via-[#3c8f3c] via-25% to-[#2f7d31] pl-[10px] shadow-[inset_-3px_0_4px_#1c5c1c]">
        <Icon n="win" className="size-[19px]" /><Fit w={38} className="ml-[5px] font-['Open_Sans',sans-serif] text-[18px] leading-5 font-bold italic [text-shadow:1px_1px_1px_#173f17]">start</Fit>
      </div>
      <div className="flex h-[30px] w-[173px] shrink-0 items-center pl-[9px]">
        <Grip />
        <div className="ml-[6px] flex gap-[7px]"><Icon n="desk" /><Icon n="pc" /><Icon n="firefox" /><Icon n="bird" /><Icon n="fz" /></div>
        <svg viewBox="0 0 10 6" className="mb-3 ml-4 h-[6px] w-[10px]"><path d="M1 0l3 3-3 3M5 0l3 3-3 3" fill="none" stroke="#b8d4ff" strokeWidth="1.200" /></svg>
        <span className="ml-[6px]"><Grip /></span>
      </div>
      <div className="flex h-[30px] w-[782px] gap-[2px] pt-1">
        {tasks.map((k, i) => (
          <span key={i} className={"flex h-[24px] w-[84px] shrink-0 items-center rounded-[3px] border pl-[9px] " + (k.on ? "border-[#143e93] bg-[#1e51b9]" : "border-[#5593f8] border-r-[#2b63cf] bg-gradient-to-b from-[#4a8cf5] to-[#3a7df0]")}>
            <Icon n={k.i} />{k.n && <b className="ml-[3px] text-[#fcd06f]">{k.n}</b>}<Fit w={k.w} className="ml-[3px]">{k.t}</Fit>{k.n && <span className="ml-auto mr-[2px]"><Caret className="text-white" /></span>}
          </span>
        ))}
      </div>
      <div className="flex h-[30px] flex-1 items-center">
        <span className="relative z-10 -mr-[9px] flex size-[18px] shrink-0 items-center justify-center rounded-full border border-[#bfe0ff] bg-[#1878d4]"><svg viewBox="0 0 8 8" className="size-2"><path d="M6 0L2 4l4 4" fill="none" stroke="#fff" strokeWidth="2" /></svg></span>
        <div className="flex h-[30px] flex-1 items-center gap-[2px] border-l border-[#0c4ba3] bg-gradient-to-b from-[#1db5f3] via-[#1191e9] via-20% to-[#128cea] pl-[10px]">
          {["skok", "xchat", "shield", "xul", "net", "msn", "a", "vol"].map((n) => <Icon key={n} n={n} />)}
          <Fit w={41} className="ml-[7px]">7:19 PM</Fit>
        </div>
      </div>
    </footer>
  );
}

export default function App() {
  return (
    <div className="flex h-[1024px] w-[1280px] flex-col overflow-hidden bg-gradient-to-b from-[#f2f0ec] to-[#ebe8d7] to-[190px] font-['DejaVu_Sans_Condensed','DejaVu_Sans',sans-serif] text-[11px] leading-[14px] text-black">
      <Chrome />
      <section className="flex h-[773px] shrink-0 justify-between overflow-hidden bg-white">
        <div className="w-[1250px]">
          <SiteHeader />
          <div className="mt-[15px] ml-[15px] flex"><Sidebar /><Thread /></div>
        </div>
        <Scrollbar />
      </section>
      <div className="flex h-[22px] shrink-0 items-center justify-between border-t-2 border-[#aca899] bg-[#ebe8d7] pl-[5px]"><Fit w={25}>Done</Fit><i className="mr-[21px] h-[18px] w-[2px] border-l border-[#c9c6b4] bg-white" /></div>
      <Taskbar />
    </div>
  );
}
